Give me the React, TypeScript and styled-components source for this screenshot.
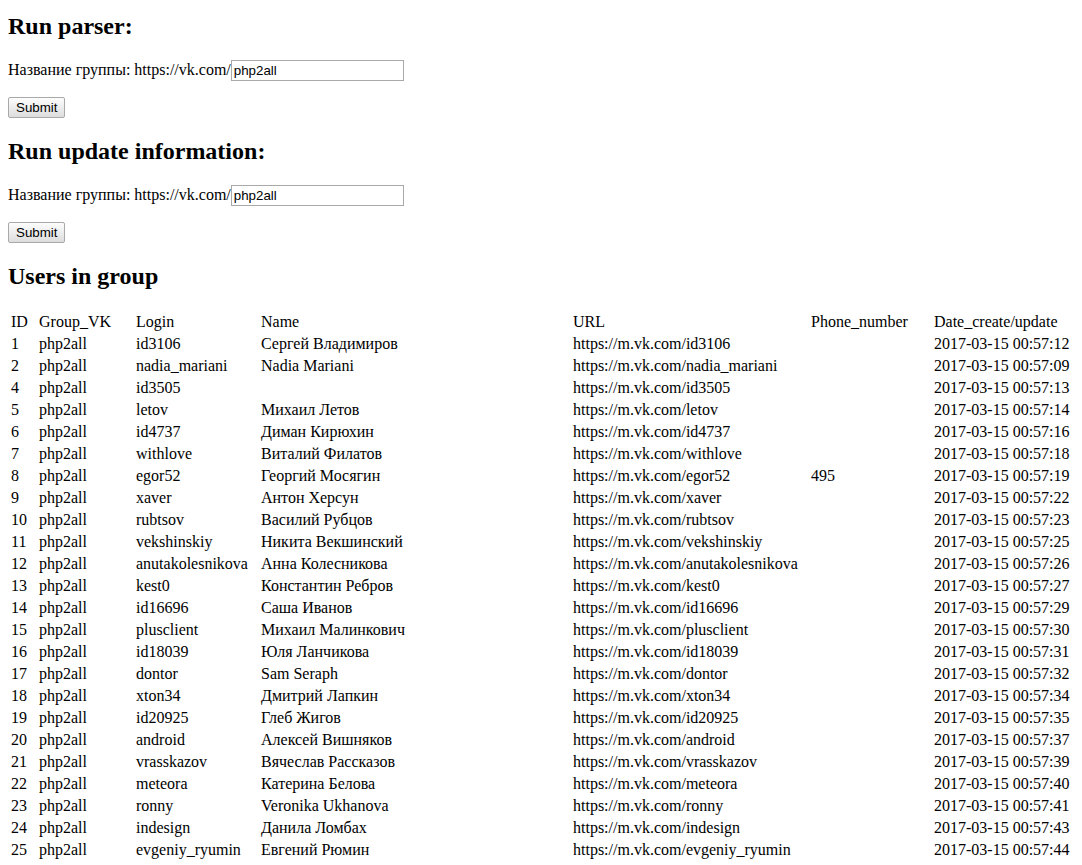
import styled, { createGlobalStyle } from "styled-components";

const GlobalStyle = createGlobalStyle`
  body {
    margin: 8px;
    font-family: "Liberation Serif", "Times New Roman", serif;
    font-size: 16px;
    color: #000;
    background: #fff;
  }
`;

const Title = styled.h2`
  font-size: 24px;
  font-weight: bold;
  margin: 19.92px 0;
  &:first-child {
    margin-top: 5px;
  }
`;

const Line = styled.p`
  margin: 16px 0;
`;

const TextInput = styled.input`
  font-family: "Liberation Sans", Arial, sans-serif;
  font-size: 13.33px;
  width: 173px;
  height: 21px;
  box-sizing: border-box;
  padding: 1px 2px;
  border: 1px solid #a9a9a9;
  color: #000;
  background: #fff;
  outline: none;
`;

const SubmitButton = styled.button`
  font-family: "Liberation Sans", Arial, sans-serif;
  font-size: 13.33px;
  height: 21px;
  box-sizing: border-box;
  padding: 1px 7px;
  border: 1px solid #a9a9a9;
  border-radius: 2px;
  background: linear-gradient(#fdfdfd, #dddddd);
  color: #000;
`;

const Table = styled.table`
  width: 100%;
  table-layout: fixed;
  border-spacing: 2px;
`;

const Cell = styled.td`
  padding: 1px;
  white-space: nowrap;
  overflow: hidden;
`;

type Row = [number, string, string, string, string, string];

const rows: Row[] = [
  [1, "id3106", "Сергей Владимиров", "id3106", "", "00:57:12"],
  [2, "nadia_mariani", "Nadia Mariani", "nadia_mariani", "", "00:57:09"],
  [4, "id3505", "", "id3505", "", "00:57:13"],
  [5, "letov", "Михаил Летов", "letov", "", "00:57:14"],
  [6, "id4737", "Диман Кирюхин", "id4737", "", "00:57:16"],
  [7, "withlove", "Виталий Филатов", "withlove", "", "00:57:18"],
  [8, "egor52", "Георгий Мосягин", "egor52", "495", "00:57:19"],
  [9, "xaver", "Антон Херсун", "xaver", "", "00:57:22"],
  [10, "rubtsov", "Василий Рубцов", "rubtsov", "", "00:57:23"],
  [11, "vekshinskiy", "Никита Векшинский", "vekshinskiy", "", "00:57:25"],
  [12, "anutakolesnikova", "Анна Колесникова", "anutakolesnikova", "", "00:57:26"],
  [13, "kest0", "Константин Ребров", "kest0", "", "00:57:27"],
  [14, "id16696", "Саша Иванов", "id16696", "", "00:57:29"],
  [15, "plusclient", "Михаил Малинкович", "plusclient", "", "00:57:30"],
  [16, "id18039", "Юля Ланчикова", "id18039", "", "00:57:31"],
  [17, "dontor", "Sam Seraph", "dontor", "", "00:57:32"],
  [18, "xton34", "Дмитрий Лапкин", "xton34", "", "00:57:34"],
  [19, "id20925", "Глеб Жигов", "id20925", "", "00:57:35"],
  [20, "android", "Алексей Вишняков", "android", "", "00:57:37"],
  [21, "vrasskazov", "Вячеслав Рассказов", "vrasskazov", "", "00:57:39"],
  [22, "meteora", "Катерина Белова", "meteora", "", "00:57:40"],
  [23, "ronny", "Veronika Ukhanova", "ronny", "", "00:57:41"],
  [24, "indesign", "Данила Ломбах", "indesign", "", "00:57:43"],
  [25, "evgeniy_ryumin", "Евгений Рюмин", "evgeniy_ryumin", "", "00:57:44"],
  [26, "id26412", "Павел Орлов", "id26412", "", "00:57:46"],
];

function RunForm({ title }: { title: string }) {
  return (
    <>
      <Title>{title}</Title>
      <form onSubmit={(e) => e.preventDefault()}>
        <Line>
          Название группы: https://vk.com/
          <TextInput type="text" defaultValue="php2all" />
        </Line>
        <Line>
          <SubmitButton type="submit">Submit</SubmitButton>
        </Line>
      </form>
    </>
  );
}

export default function App() {
  return (
    <>
      <GlobalStyle />
      <RunForm title="Run parser:" />
      <RunForm title="Run update information:" />
      <Title>Users in group</Title>
      <Table>
        <colgroup>
          <col style={{ width: 26 }} />
          <col style={{ width: 95 }} />
          <col style={{ width: 123 }} />
          <col style={{ width: 310 }} />
          <col style={{ width: 236 }} />
          <col style={{ width: 121 }} />
          <col />
        </colgroup>
        <tbody>
          <tr>
            <Cell>ID</Cell>
            <Cell>Group_VK</Cell>
            <Cell>Login</Cell>
            <Cell>Name</Cell>
            <Cell>URL</Cell>
            <Cell>Phone_number</Cell>
            <Cell>Date_create/update</Cell>
          </tr>
          {rows.map(([id, login, name, path, phone, time]) => (
            <tr key={id}>
              <Cell>{id}</Cell>
              <Cell>php2all</Cell>
              <Cell>{login}</Cell>
              <Cell>{name}</Cell>
              <Cell>https://m.vk.com/{path}</Cell>
              <Cell>{phone}</Cell>
              <Cell>2017-03-15 {time}</Cell>
            </tr>
          ))}
        </tbody>
      </Table>
    </>
  );
}
